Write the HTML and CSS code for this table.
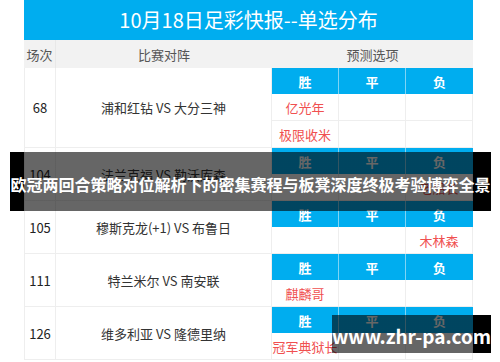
FILE: index.html
```html
<!DOCTYPE html>
<html lang="zh-CN">
<head>
<meta charset="utf-8">
<title>10月18日足彩快报--单选分布</title>
<link rel="stylesheet" href="styles.css">
</head>
<body>
<div class="sheet">
  <div class="title">10月18日足彩快报--单选分布</div>
  <div class="row head">
    <div class="c-no">场次</div>
    <div class="c-teams">比赛对阵</div>
    <div class="c-picks">预测选项</div>
  </div>

  <div class="row match">
    <div class="no">68</div>
    <div class="teams">浦和红钻 VS 大分三神</div>
    <div class="picks">
      <div class="ph">胜</div><div class="ph">平</div><div class="ph">负</div>
      <div class="pv">亿光年</div><div class="pv"></div><div class="pv"></div>
      <div class="pv">极限收米</div><div class="pv"></div><div class="pv"></div>
    </div>
  </div>

  <div class="row match">
    <div class="no">104</div>
    <div class="teams">法兰克福 VS 勒沃库森</div>
    <div class="picks">
      <div class="ph">胜</div><div class="ph">平</div><div class="ph">负</div>
      <div class="pv"></div><div class="pv"></div><div class="pv">老船长</div>
    </div>
  </div>

  <div class="row match">
    <div class="no">105</div>
    <div class="teams">穆斯克龙(+1) VS 布鲁日</div>
    <div class="picks">
      <div class="ph">胜</div><div class="ph">平</div><div class="ph">负</div>
      <div class="pv"></div><div class="pv"></div><div class="pv">木林森</div>
    </div>
  </div>

  <div class="row match">
    <div class="no">111</div>
    <div class="teams">特兰米尔 VS 南安联</div>
    <div class="picks">
      <div class="ph">胜</div><div class="ph">平</div><div class="ph">负</div>
      <div class="pv">麒麟哥</div><div class="pv"></div><div class="pv"></div>
    </div>
  </div>

  <div class="row match">
    <div class="no">126</div>
    <div class="teams">维多利亚 VS 隆德里纳</div>
    <div class="picks">
      <div class="ph">胜</div><div class="ph">平</div><div class="ph">负</div>
      <div class="pv">冠军典狱长</div><div class="pv"></div><div class="pv"></div>
    </div>
  </div>
</div>

<div class="banner">欧冠两回合策略对位解析下的密集赛程与板凳深度终极考验博弈全景</div>
<div class="watermark">www.zhr-pa.com</div>
</body>
</html>
```

FILE: styles.css
```css
* { box-sizing: border-box; }

html, body {
  margin: 0;
  padding: 0;
  background: #fff;
  font-family: "Noto Sans CJK SC", "Noto Sans", sans-serif;
}

body {
  width: 500px;
  height: 362px;
  position: relative;
  overflow: hidden;
}

.sheet {
  margin-left: 24px;
  width: 449px;
}

.title {
  height: 40px;
  background: #00adef;
  color: #fff;
  font-size: 20px;
  line-height: 40px;
  text-align: center;
}

.row {
  display: grid;
  grid-template-columns: 32px 216px 201px;
}

.head {
  height: 28px;
  background: #f2f2f2;
  color: #555;
  font-size: 13px;
}

.head > div {
  display: flex;
  align-items: center;
  justify-content: center;
}

.head .c-no {
  border-right: 1px solid #e8e8e8;
}

.no,
.teams {
  display: flex;
  align-items: center;
  justify-content: center;
  border-bottom: 1px solid #eeeeee;
  border-right: 1px solid #eeeeee;
  color: #333;
  font-size: 13px;
}

.no {
  border-left: 1px solid #eeeeee;
  color: #222;
}

.picks {
  display: grid;
  grid-template-columns: 67px 67px 67px;
}

.ph {
  height: 26px;
  background: #00adef;
  color: #fff;
  font-weight: bold;
  font-size: 13px;
  display: flex;
  align-items: center;
  justify-content: center;
  border-right: 1px solid #7fd4f5;
}

.ph:nth-child(3) {
  border-right: none;
}

.pv {
  height: 27px;
  border-bottom: 1px solid #eeeeee;
  border-right: 1px solid #eeeeee;
  color: #f05050;
  font-size: 13px;
  display: flex;
  align-items: center;
  justify-content: center;
  white-space: nowrap;
}

.banner {
  position: absolute;
  left: 10px;
  top: 152px;
  width: 481px;
  height: 59px;
  padding-top: 4px;
  background: linear-gradient(to right, #000 0 14px, rgba(0, 0, 0, 0.6) 14px 463px, #000 463px);
  color: #fff;
  font-size: 16px;
  font-weight: bold;
  display: flex;
  align-items: center;
  justify-content: center;
  white-space: nowrap;
}

.watermark {
  position: absolute;
  left: 332px;
  top: 315px;
  width: 159px;
  height: 38px;
  padding-top: 3px;
  background: linear-gradient(to right, rgba(0, 0, 0, 0.6) 0 141px, #000 141px);
  color: #fff;
  font-size: 19px;
  font-weight: bold;
  display: flex;
  align-items: center;
  justify-content: center;
  white-space: nowrap;
}
```
